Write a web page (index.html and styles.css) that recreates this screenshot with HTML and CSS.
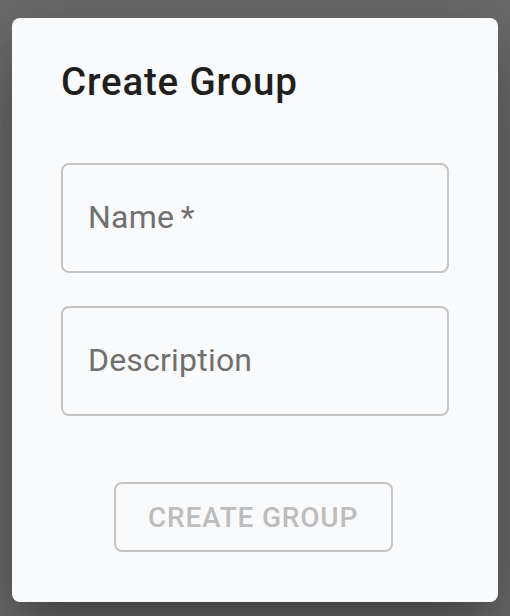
FILE: index.html
```html
<!DOCTYPE html>
<html lang="en">
<head>
<meta charset="utf-8">
<title>Create Group</title>
<link rel="stylesheet" href="styles.css">
</head>
<body>
<div class="backdrop">
  <div class="dialog">
    <h2 class="title">Create Group</h2>
    <div class="field field-first"><span class="label">Name&#8201;*</span></div>
    <div class="field field-second"><span class="label">Description</span></div>
    <div class="actions">
      <button class="btn" type="button" disabled>Create Group</button>
    </div>
  </div>
</div>
</body>
</html>
```

FILE: styles.css
```css
html, body {
  margin: 0;
  padding: 0;
  width: 510px;
  height: 616px;
  overflow: hidden;
}
body {
  background: #6b6b6b;
  font-family: Roboto, "Liberation Sans", sans-serif;
}
.backdrop {
  padding: 18px 12px 0 12px;
}
.dialog {
  box-sizing: border-box;
  width: 486px;
  height: 584px;
  background: #f9fafc;
  border-radius: 8px;
  padding: 42px 49px 0 49px;
  display: flex;
  flex-direction: column;
  box-shadow: 0 22px 30px -14px rgba(0,0,0,0.2), 0 48px 76px 6px rgba(0,0,0,0.14), 0 18px 92px 16px rgba(0,0,0,0.12);
}
.title {
  margin: 0;
  font-size: 38.5px;
  line-height: 44px;
  font-weight: 500;
  color: #1f1f1f;
  letter-spacing: 0.8px;
}
.field {
  box-sizing: border-box;
  height: 110px;
  border: 2px solid #c4c4c4;
  border-radius: 8px;
  display: flex;
  align-items: center;
  padding-left: 25px;
}
.field-first {
  margin-top: 58.5px;
}
.field-second {
  margin-top: 33.5px;
}
.label {
  font-size: 32px;
  line-height: 1.172;
  color: #707070;
  letter-spacing: 0.2px;
}
.actions {
  display: flex;
  justify-content: center;
  margin-top: 66px;
}
.btn {
  box-sizing: border-box;
  width: 279px;
  height: 70px;
  margin-right: 4px;
  background: transparent;
  border: 2px solid #c4c4c4;
  border-radius: 8px;
  font-family: Roboto, "Liberation Sans", sans-serif;
  font-size: 28px;
  font-weight: 500;
  letter-spacing: 0.8px;
  text-transform: uppercase;
  color: #bdbdbd;
  padding: 0;
}
```
